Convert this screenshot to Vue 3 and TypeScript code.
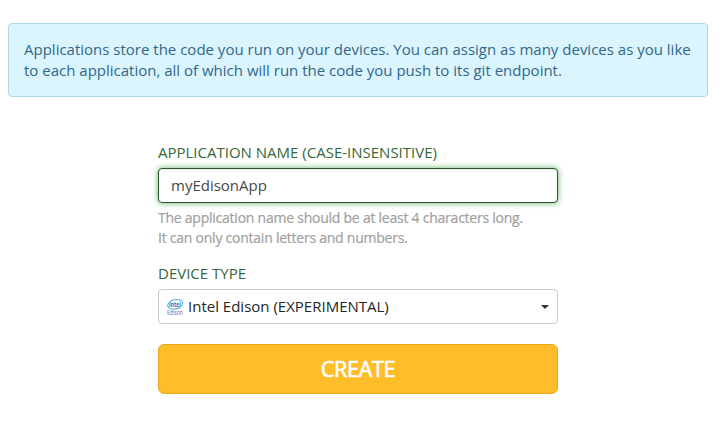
<script setup lang="ts">
import { ref } from 'vue'

const appName = ref<string>('myEdisonApp')
const deviceType = ref<string>('Intel Edison (EXPERIMENTAL)')
</script>

<template>
  <main class="page">
    <div class="notice">
      Applications store the code you run on your devices. You can assign as many devices as you like<br />
      to each application, all of which will run the code you push to its git endpoint.
    </div>
    <form class="form" @submit.prevent>
      <label class="label" for="app-name">APPLICATION NAME (CASE-INSENSITIVE)</label>
      <input id="app-name" v-model="appName" class="field name-field" type="text" spellcheck="false" />
      <p class="help">
        The application name should be at least 4 characters long.<br />
        It can only contain letters and numbers.
      </p>
      <span class="label">DEVICE TYPE</span>
      <button class="field select" type="button">
        <svg class="logo" width="16" height="16" viewBox="0 0 16 16" aria-hidden="true">
          <path
            d="M1.2 8.2C-.9 4.2 4.8.4 10.2.6c4.4.2 6.2 2.6 5.2 5-.4.9-1 1.6-1.8 2.1M1.2 8.2c1.4 2.6 8.2 2.4 12.4.2"
            fill="none"
            stroke="#3a9ad6"
            stroke-width="1"
          />
          <text class="logo-brand" x="1.9" y="7.5" textLength="12" lengthAdjust="spacingAndGlyphs">intel</text>
          <text class="logo-model" x="0" y="15.9" textLength="16" lengthAdjust="spacingAndGlyphs">Edison</text>
        </svg>
        <span class="value">{{ deviceType }}</span>
        <svg class="caret" width="8" height="4" viewBox="0 0 8 4" aria-hidden="true">
          <path d="M0 0h8L4 4z" fill="#333" />
        </svg>
      </button>
      <button class="create" type="submit">CREATE</button>
    </form>
  </main>
</template>

<style>
body {
  margin: 0;
  background: #fff;
}
</style>

<style scoped>
.page {
  box-sizing: border-box;
  width: 719px;
  height: 441px;
  padding: 23px 11px 0 8px;
  font-family: 'Open Sans', sans-serif;
  font-size: 15px;
  line-height: 21px;
}
.notice {
  box-sizing: border-box;
  height: 74px;
  padding: 15px 0 0 15px;
  border: 1px solid #abd9e9;
  border-radius: 4px;
  background: #dbf5ff;
  color: #31678a;
  white-space: nowrap;
}
.form {
  display: flex;
  flex-direction: column;
  width: 400px;
  margin: 45px 0 0 150px;
}
.label {
  height: 26px;
  color: #37683a;
}
.field {
  box-sizing: border-box;
  width: 400px;
  height: 35px;
  margin: 0;
  border: 1px solid #ccc;
  border-radius: 4px;
  background: #fff;
  font: inherit;
}
.name-field {
  padding: 0 12px 2px;
  border-color: #2b542c;
  outline: none;
  color: #484848;
  box-shadow: inset 0 1px 1px rgba(0, 0, 0, 0.075), 0 0 6px #67b168;
}
.help {
  margin: 5px 0 15px;
  color: #a0a0a0;
  font-size: 14px;
  line-height: 20px;
  letter-spacing: -0.24px;
  -webkit-text-stroke: 0.2px #a0a0a0;
}
.select {
  display: flex;
  align-items: center;
  padding: 0 8px;
  color: #262626;
  text-align: left;
}
.logo {
  flex: none;
  margin-right: 5px;
  overflow: visible;
}
.logo-brand {
  fill: #1678bd;
  font-size: 6.5px;
  font-weight: 700;
}
.logo-model {
  fill: #6468ad;
  font-size: 6.5px;
}
.value {
  flex: 1;
}
.create {
  box-sizing: border-box;
  height: 50px;
  margin-top: 20px;
  padding: 0;
  border: 1px solid #e9a820;
  border-radius: 6px;
  background: #ffbd2a;
  color: #fff;
  font: 400 21.5px/28px 'Open Sans', sans-serif;
  letter-spacing: -0.25px;
  -webkit-text-stroke: 0.6px #fff;
}
</style>
